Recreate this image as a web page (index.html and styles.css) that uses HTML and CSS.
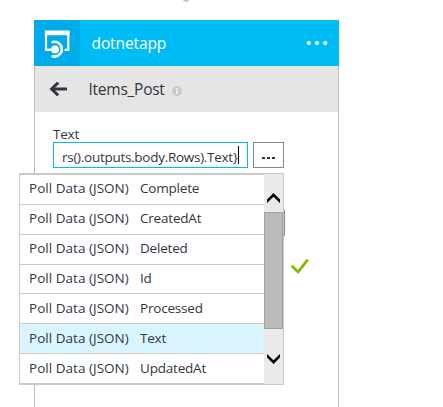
FILE: index.html
```html
<!DOCTYPE html>
<html lang="en">
<head>
<meta charset="utf-8">
<title>dotnetapp</title>
<link rel="stylesheet" href="styles.css">
</head>
<body>
<span class="connector"></span>
<main class="card">
  <header class="card-header">
    <div class="logo">
      <svg width="46" height="46" viewBox="0 0 46 46" fill="none" stroke="#fff">
        <path d="M17 29.8H12V12H34.3V29.8H30.5" stroke-width="2.2"/>
        <path d="M10.9 10.5H35.4V15.2H10.9Z" fill="#fff" stroke="none"/>
        <path d="M17.5 22.4A7.4 7.4 0 1 1 17.6 36" stroke="#00abec" stroke-width="5"/>
        <path d="M17.5 22.4A7.4 7.4 0 1 1 17.6 36" stroke-width="2.5"/>
        <circle cx="21" cy="29.4" r="3.9" fill="#fff" stroke="none"/>
        <path d="M12 29.8H21" stroke-width="2.2"/>
      </svg>
    </div>
    <h1 class="title">dotnetapp</h1>
    <svg class="more" width="22" height="6" viewBox="0 0 22 6" fill="#fff"><circle cx="2.8" cy="3" r="2.1"/><circle cx="11" cy="3" r="2.1"/><circle cx="19.2" cy="3" r="2.1"/></svg>
  </header>
  <div class="card-sub">
    <svg class="back" width="19" height="14" viewBox="0 0 19 14" fill="none" stroke="#32363f" stroke-width="3"><path d="M2.5 7H18"/><path d="M9.2 .7L2.6 7L9.2 13.3"/></svg>
    <h2 class="subtitle">Items_Post</h2>
    <svg class="info" width="10" height="10" viewBox="0 0 10 10"><circle cx="5" cy="5" r="5" fill="#cbcbcb"/><path d="M5 2V3.4M5 4.3V8" stroke="#fff" stroke-width="1.3"/></svg>
  </div>
  <section class="form">
    <label class="label">Text</label>
    <div class="field-row">
      <div class="input"><span class="value">rs().outputs.body.Rows).Text}</span><span class="caret"></span></div>
      <div class="browse"><i></i><i></i><i></i></div>
    </div>
    <span class="behind"></span>
    <svg class="check" width="20" height="17" viewBox="0 0 20 17" fill="none" stroke="#7fba00" stroke-width="2.8"><path d="M1.7 7.8L8 14L17.8 1.7"/></svg>
    <div class="menu">
      <ul class="list">
        <li><span class="source">Poll Data (JSON)</span><span class="name">Complete</span></li>
        <li><span class="source">Poll Data (JSON)</span><span class="name">CreatedAt</span></li>
        <li><span class="source">Poll Data (JSON)</span><span class="name">Deleted</span></li>
        <li><span class="source">Poll Data (JSON)</span><span class="name">Id</span></li>
        <li><span class="source">Poll Data (JSON)</span><span class="name">Processed</span></li>
        <li class="selected"><span class="source">Poll Data (JSON)</span><span class="name">Text</span></li>
        <li><span class="source">Poll Data (JSON)</span><span class="name">UpdatedAt</span></li>
      </ul>
      <div class="scrollbar">
        <svg class="up" width="13" height="10" viewBox="0 0 13 10"><path d="M0 6.4L6.5 0L13 6.4V10L6.5 3.8L0 10Z"/></svg>
        <div class="thumb"></div>
        <svg class="down" width="13" height="10" viewBox="0 0 13 10"><path d="M0 3.6L6.5 10L13 3.6V0L6.5 6.2L0 0Z"/></svg>
      </div>
    </div>
  </section>
</main>
</body>
</html>
```
FILE: styles.css
```css
* { box-sizing: border-box; }
body {
  margin: 0;
  height: 407px;
  overflow: hidden;
  position: relative;
  padding: 20px 0 0 34px;
  background: #fff;
  color: #32363f;
  font-family: "Open Sans", sans-serif;
}
.connector {
  position: absolute;
  left: 183px;
  top: -4px;
  width: 6px;
  height: 6px;
  border-radius: 50%;
  background: #bfc0cf;
}
.card { width: 305px; height: 387px; position: relative; display: flex; flex-direction: column; }
.card-header { height: 46px; flex: none; display: flex; align-items: center; background: #00bcf5; color: #fff; }
.logo { width: 46px; height: 46px; background: #00abec; }
.logo svg { display: block; }
.title { margin: 0 0 0 11.5px; font-size: 15.5px; font-weight: 400; line-height: 22px; letter-spacing: -.1px; }
.more { margin: -1px 11px 0 auto; }
.card-sub {
  height: 46px;
  flex: none;
  display: flex;
  align-items: center;
  padding-left: 14px;
  background: #e5e5e5;
  border: solid #bcbcbc;
  border-width: 0 1px;
}
.subtitle { margin: 0 0 0 20.5px; font-size: 15.5px; font-weight: 400; line-height: 22px; letter-spacing: -.25px; }
.info { margin: 3px 0 0 7px; }
.form { flex: 1; padding: 14px 0 0 18px; border: solid #bcbcbc; border-width: 0 1px; }
.label { display: block; height: 16px; font-size: 13.5px; line-height: 16px; letter-spacing: -.2px; }
.field-row { display: flex; gap: 5px; }
.input { width: 195px; height: 26px; display: flex; align-items: center; padding-left: 8px; border: 1px solid #00bcf2; }
.value { font-size: 13.5px; line-height: 18px; letter-spacing: -.28px; padding-top: 4px; white-space: nowrap; }
.caret { width: 1px; height: 18px; background: #000; }
.browse { width: 31px; height: 26px; display: flex; justify-content: center; gap: 2px; padding-top: 14px; border: 1px solid #85878d; }
.browse i { width: 3px; height: 2px; background: #32363f; }
.behind { position: absolute; left: 250px; top: 190px; width: 1px; height: 26px; background: #85878d; }
.check { position: absolute; left: 256px; top: 238px; }
.menu {
  position: absolute;
  left: -15px;
  top: 153px;
  width: 265px;
  height: 212px;
  display: flex;
  background: #fff;
  border: 1px solid #c9c9c9;
}
.list { width: 244px; margin: 0; padding: 0; list-style: none; border-top: 1px solid #c9c9c9; }
.list li {
  height: 29.86px;
  display: flex;
  align-items: center;
  padding: 0 0 2px 9px;
  border-bottom: 1px solid #c9c9c9;
  font-size: 13.5px;
  letter-spacing: -.2px;
  white-space: nowrap;
}
.list .selected { background: #d9f5fe; }
.source { width: 111px; letter-spacing: .03px; }
.scrollbar { width: 19px; background: #eaeaea; display: flex; flex-direction: column; align-items: center; padding-top: 19px; }
.thumb { width: 19px; height: 117px; margin: 9px 0 25px; background: #bbb; border: 1px solid #a0a0a0; }
```
